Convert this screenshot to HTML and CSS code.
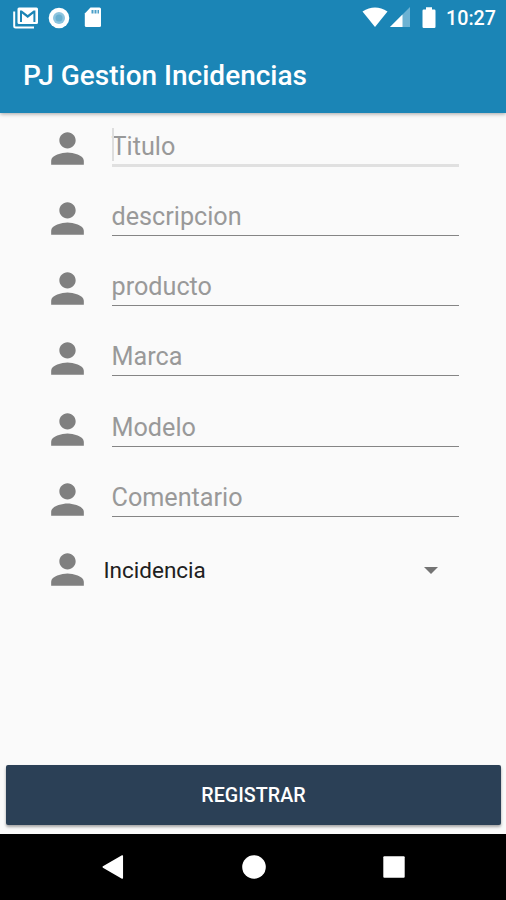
FILE: index.html
```html
<!DOCTYPE html>
<html lang="es">
<head>
<meta charset="utf-8">
<title>PJ Gestion Incidencias</title>
<link rel="stylesheet" href="styles.css">
</head>
<body>
<svg class="defs" aria-hidden="true"><symbol id="person" viewBox="0 0 24 24"><path d="M12 12c2.21 0 4-1.79 4-4s-1.79-4-4-4-4 1.79-4 4 1.79 4 4 4zm0 2c-2.67 0-8 1.34-8 4v2h16v-2c0-2.66-5.33-4-8-4z"/></symbol></svg>
<div class="screen">
  <header class="top">
    <div class="status">
      <svg class="mail" width="26" height="22" viewBox="0 0 26 22"><path d="M1.200 4.500V19q0 1.500 1.500 1.500H21" fill="none" stroke="#fff" stroke-width="2"/><path fill-rule="evenodd" d="M6 .5h17.500q1.500 0 1.500 1.500v13.500q0 1.500-1.500 1.500H6q-1.500 0-1.500-1.500V2Q4.500.5 6 .5zM7 3.500V15h2V6.500l5.700 4.500 5.700-4.500V15h2V3.500h-1.800L14.700 8 8.800 3.500z" fill="#fff"/></svg>
      <svg class="disc" width="22" height="22" viewBox="0 0 22 22"><circle cx="11" cy="11" r="10.300" fill="#fff"/><circle cx="11" cy="11" r="6" fill="#8cc4df"/><circle cx="11" cy="11" r="3.500" fill="#69afd0"/></svg>
      <svg class="card" width="18" height="21" viewBox="0 0 18 21"><path d="M6.500.5H15.500q1.500 0 1.500 1.500v16.500q0 1.500-1.500 1.500H2.300Q.8 20 .8 18.500V6.500z" fill="#fff"/><path d="M7.500 3h2v3.500h-2zm3 0h2v3.500h-2zm3 0h1.500v3.500h-1.500z" fill="#4b9fc8"/></svg>
      <span class="gap"></span>
      <svg class="wifi" width="26" height="21" viewBox="0 0 26 21"><path d="M.5 4.500Q13-3.500 25.500 4.500L13 20z" fill="#fff"/></svg>
      <svg class="signal" width="21" height="21" viewBox="0 0 21 21"><path d="M0 20L20 0v20z" fill="#6db2d3"/><path d="M0 20L12.500 7.500V20z" fill="#fff"/></svg>
      <svg class="battery" width="14" height="22" viewBox="0 0 14 22"><path d="M4 .3h6v2.200h2.300q1.200 0 1.200 1.200v16.100q0 1.200-1.200 1.200H1.700Q.5 21 .5 19.800V3.700Q.5 2.500 1.700 2.500H4z" fill="#fff"/></svg>
      <span class="clock">10:27</span>
    </div>
    <h1>PJ Gestion Incidencias</h1>
  </header>
  <main>
    <div class="row"><svg class="person"><use href="#person"/></svg><div class="field focused">Titulo</div></div>
    <div class="row"><svg class="person"><use href="#person"/></svg><div class="field">descripcion</div></div>
    <div class="row"><svg class="person"><use href="#person"/></svg><div class="field">producto</div></div>
    <div class="row"><svg class="person"><use href="#person"/></svg><div class="field">Marca</div></div>
    <div class="row"><svg class="person"><use href="#person"/></svg><div class="field">Modelo</div></div>
    <div class="row"><svg class="person"><use href="#person"/></svg><div class="field">Comentario</div></div>
    <div class="row"><svg class="person"><use href="#person"/></svg><div class="spinner"><span>Incidencia</span><svg width="14" height="7" viewBox="0 0 14 7"><path d="M0 0h14L7 7z" fill="#737373"/></svg></div></div>
  </main>
  <button class="register">REGISTRAR</button>
  <nav>
    <svg width="22" height="24" viewBox="0 0 22 24"><path d="M20.300 1v22L1.300 12z" fill="#fff" stroke="#fff" stroke-width="1.500" stroke-linejoin="round"/></svg>
    <svg width="24" height="24" viewBox="0 0 24 24"><circle cx="12" cy="12" r="11.800" fill="#fff"/></svg>
    <svg width="22" height="22" viewBox="0 0 22 22"><rect x=".3" y=".3" width="21.400" height="21.400" rx="1" fill="#fff"/></svg>
  </nav>
</div>
</body>
</html>
```

FILE: styles.css
```css
* { box-sizing: border-box; }
body {
  margin: 0;
  font-family: Roboto, sans-serif;
  background: #fafafa;
}
svg { display: block; flex: none; }
.defs { display: none; }
.screen {
  width: 506px;
  height: 900px;
  display: flex;
  flex-direction: column;
  overflow: hidden;
}
.top {
  height: 112.500px;
  flex: none;
  color: #fff;
  background: #1b85b6;
  box-shadow: 0 1px 4px rgba(0, 0, 0, .35);
}
.status {
  height: 35px;
  display: flex;
  align-items: center;
  padding: 0 10px 0 13px;
}
.disc { margin-left: 9px; }
.card { margin-left: 14px; }
.gap { flex: 1; }
.signal { margin-left: 2px; }
.battery { margin-left: 10.500px; }
.clock {
  width: 50px;
  margin-left: 10.500px;
  font-size: 19.700px;
  font-weight: 500;
  line-height: 38px;
  padding-top: 2px;
  white-space: nowrap;
}
h1 {
  margin: 0 0 0 23px;
  padding-top: 2px;
  font-size: 28px;
  font-weight: 500;
  line-height: 78px;
}
main {
  flex: 1;
  padding: 11px 47px 0 43px;
}
.row {
  display: flex;
  align-items: flex-start;
  height: 70.280px;
}
.person {
  width: 49px;
  height: 49px;
  fill: #808080;
}
.field {
  flex: 1;
  height: 42px;
  margin-left: 19.500px;
  font-size: 25.200px;
  line-height: 45px;
  color: #999;
  border-bottom: 1.500px solid #858585;
}
.focused {
  position: relative;
  border-bottom: 3px solid #e0e0e0;
  height: 43.500px;
}
.focused::before {
  content: "";
  position: absolute;
  left: 0;
  top: 4px;
  width: 2px;
  height: 33px;
  background: #dedede;
}
.spinner {
  flex: 1;
  display: flex;
  align-items: center;
  justify-content: space-between;
  height: 50px;
  padding: 0 21px 0 11.500px;
  font-size: 22.500px;
  color: #202020;
}
.register {
  flex: none;
  height: 60px;
  margin: 0 5px 9px 6px;
  padding: 2px 0 0;
  border: 0;
  border-radius: 2px;
  color: #fff;
  background: #2b4056;
  box-shadow: 0 2px 3px rgba(0, 0, 0, .35);
  font: 500 19.700px Roboto, sans-serif;
}
nav {
  flex: none;
  height: 66.500px;
  display: flex;
  align-items: center;
  justify-content: space-between;
  padding: 0 101px 0 102px;
  background: #000;
}
```
